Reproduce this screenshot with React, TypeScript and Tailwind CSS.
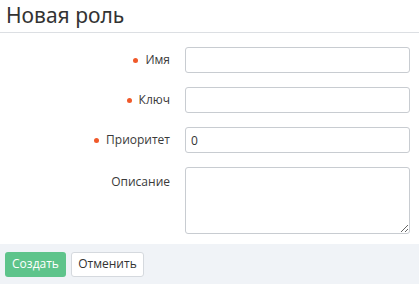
import React from 'react';

const Dot = () => <span className="mr-[7px] inline-block h-[5px] w-[5px] rounded-full bg-[#f0592a]" />;

const Row = ({ label, required, children, top }: { label: string; required?: boolean; children: React.ReactNode; top?: boolean }) => (
  <div className={`flex ${top ? 'items-start' : 'items-center'}`}>
    <div className={`flex w-[171px] shrink-0 items-center justify-end pr-[1px] text-[12px] text-[#3a3a3a] ${top ? 'pt-[6px]' : ''}`}>
      {required && <Dot />}
      {label}
    </div>
    <div className="ml-[14px] w-[225px]">{children}</div>
  </div>
);

const inputCls = 'block h-[26px] w-full rounded-[3px] border border-[#c8ccd1] bg-white px-[5px] text-[12px] text-[#333] outline-none';

export default function App() {
  return (
    <div className="flex h-[284px] w-[419px] flex-col bg-white" style={{ fontFamily: '"Open Sans", "Noto Sans", sans-serif' }}>
      <div className="h-[33px] border-b border-[#dcdfe3] pl-[6px]">
        <h1 className="text-[21px] leading-[30px] text-[#333]" style={{ fontFamily: '"Noto Sans", sans-serif' }}>Новая роль</h1>
      </div>
      <div className="flex flex-1 flex-col gap-[14px] pt-[14px]">
        <Row label="Имя" required>
          <input className={inputCls} />
        </Row>
        <Row label="Ключ" required>
          <input className={inputCls} />
        </Row>
        <Row label="Приоритет" required>
          <input className={inputCls} defaultValue="0" />
        </Row>
        <Row label="Описание" top>
          <textarea className="block h-[67px] w-full rounded-[3px] border border-[#c8ccd1] bg-white px-[5px] text-[12px] outline-none" />
        </Row>
      </div>
      <div className="flex h-[40px] items-center gap-[5px] bg-[#f0f3f7] px-[5px]">
        <button className="h-[25px] w-[61px] rounded-[3px] bg-[#5ec48b] text-[12px] text-white">Создать</button>
        <button className="h-[25px] w-[73px] rounded-[3px] border border-[#d5d9de] bg-white text-[12px] text-[#333]">Отменить</button>
      </div>
    </div>
  );
}
